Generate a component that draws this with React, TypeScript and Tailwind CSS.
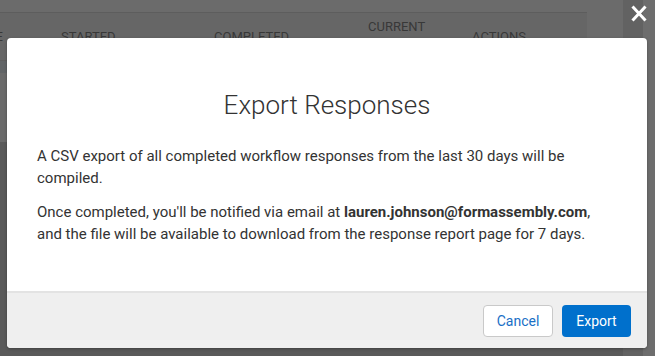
import React from "react";

export default function App() {
  return (
    <div
      className="relative w-[655px] h-[356px] overflow-hidden bg-[#6b6b6b]"
      style={{ fontFamily: "Roboto, 'Liberation Sans', sans-serif" }}
    >
      {/* background page */}
      <div className="flex h-full">
        <div className="w-[587px] flex flex-col pt-[12px]">
          <div className="flex h-[48px] items-center border-t border-[#5d5d5d] bg-[#666666] text-[13px] leading-[20px] text-[#383838] whitespace-nowrap">
            <div className="w-[61px] pr-[58px] flex justify-end overflow-hidden">NAME</div>
            <div className="w-[153px]">STARTED</div>
            <div className="w-[154px]">COMPLETED</div>
            <div className="w-[104px] flex flex-col">
              <span>CURRENT</span>
              <span>STEP</span>
            </div>
            <div>ACTIONS</div>
          </div>
          <div className="h-[1px] bg-[#5e5e5e]" />
          <div className="h-[12px] bg-[#616466]" />
          <div className="h-[69px] bg-[#6a6a6a]" />
          <div className="flex-1 bg-[#5a5a5a]" />
        </div>
        <div className="w-[36px] flex flex-col">
          <div className="h-[142px]" />
          <div className="flex-1 bg-[#5a5a5a]" />
        </div>
        <div className="w-[20px] bg-[#626262]" />
        <div className="flex-1 bg-[#6d6d6d]" />
      </div>

      {/* close icon */}
      <svg
        className="absolute left-[631px] top-[5px]"
        width="16"
        height="17"
        viewBox="0 0 16 17"
      >
        <path d="M1.5 1.5 L14.5 15.5 M14.5 1.5 L1.5 15.5" stroke="#ffffff" strokeWidth="3" strokeLinecap="butt" />
      </svg>

      {/* modal */}
      <div className="absolute left-[7px] top-[38px] w-[640px] h-[310px] flex flex-col bg-white rounded-[4px] overflow-hidden shadow-[0_1px_3px_rgba(0,0,0,0.3)]">
        <div className="flex-1 px-[30px] pt-[51px] text-[#333333]">
          <h2 className="text-center text-[26px] leading-[32px] font-light text-[#333333]">
            Export Responses
          </h2>
          <p className="mt-[24px] text-[15px] leading-[22px]">
            A CSV export of all completed workflow responses from the last 30 days will be compiled.
          </p>
          <p className="mt-[12px] text-[15px] leading-[22px]">
            Once completed, you'll be notified via email at{" "}
            <span className="font-bold">lauren.johnson@formassembly.com</span>, and the file will be
            available to download from the response report page for 7 days.
          </p>
        </div>
        <div className="h-[57px] border-t-2 border-[#e3e3e3] bg-[#efefef] flex justify-end items-start pt-[12px] pr-[16px] gap-[9px]">
          <button className="w-[70px] h-[32px] rounded-[4px] border border-[#c9c9c9] bg-white text-[14px] text-[#1a6fc6]">
            Cancel
          </button>
          <button className="w-[69px] h-[32px] rounded-[4px] bg-[#0070cc] text-[14px] text-white">
            Export
          </button>
        </div>
      </div>
    </div>
  );
}
